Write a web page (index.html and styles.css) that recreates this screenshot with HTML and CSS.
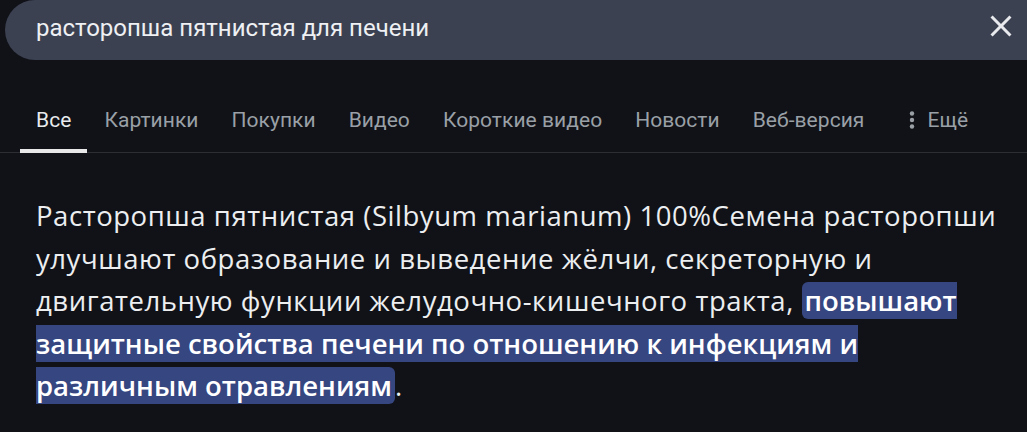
FILE: index.html
```html
<!DOCTYPE html>
<html lang="ru">
<head>
<meta charset="utf-8">
<link rel="stylesheet" href="styles.css">
</head>
<body>
<header class="search">
  <div class="query">расторопша пятнистая для печени</div>
  <button class="clear" aria-label="Очистить">
    <svg viewBox="0 0 24 24"><path d="M19 6.41 17.59 5 12 10.59 6.41 5 5 6.41 10.59 12 5 17.59 6.41 19 12 13.41 17.59 19 19 17.59 13.41 12z" fill="#e8eaed"/></svg>
  </button>
</header>
<nav class="tabs">
  <a class="tab active">Все</a>
  <a class="tab">Картинки</a>
  <a class="tab">Покупки</a>
  <a class="tab">Видео</a>
  <a class="tab">Короткие видео</a>
  <a class="tab">Новости</a>
  <a class="tab">Веб-версия</a>
  <a class="tab more"><svg width="6" height="20" viewBox="0 0 6 20"><circle cx="3" cy="3.5" r="2.2" fill="#9aa0a6"/><circle cx="3" cy="10" r="2.2" fill="#9aa0a6"/><circle cx="3" cy="16.5" r="2.2" fill="#9aa0a6"/></svg>Ещё</a>
</nav>
<main class="answer">
  <p>Расторопша пятнистая (Silbyum marianum) 100%Семена расторопши улучшают образование и выведение жёлчи, секреторную и двигательную функции желудочно-кишечного тракта, <mark class="hl">повышают защитные свойства печени по отношению к инфекциям и различным отравлениям</mark>.</p>
</main>
</body>
</html>
```
FILE: styles.css
```css
html, body {
  margin: 0;
  padding: 0;
  background: #101218;
}
body {
  width: 1027px;
  height: 432px;
  overflow: hidden;
  color: #e8eaed;
  font-family: Roboto, "Liberation Sans", Arial, sans-serif;
}
.search {
  display: flex;
  align-items: center;
  height: 60px;
  margin-left: 5px;
  margin-right: -40px;
  padding: 0 48px 0 31px;
  background: #3c4151;
  border-radius: 30px;
}
.query {
  flex: 1;
  font-size: 24px;
  color: #eef0f3;
  padding-bottom: 4px;
}
.clear {
  display: flex;
  border: 0;
  background: none;
  padding: 0;
  margin-bottom: 9px;
}
.clear svg {
  width: 36px;
  height: 36px;
}
.tabs {
  display: flex;
  align-items: stretch;
  gap: 1px;
  margin-top: 33px;
  padding-left: 20px;
  height: 59px;
  border-bottom: 1px solid #2c2e34;
}
.tab {
  display: flex;
  align-items: center;
  gap: 12px;
  padding: 0 16px 3px;
  font-size: 21px;
  letter-spacing: 0.05px;
  color: #9aa0a6;
  border-bottom: 4px solid transparent;
  margin-bottom: -1px;
}
.tab.active {
  color: #e8eaed;
  border-bottom-color: #e8e8e8;
}
.tab.more {
  margin-left: 12px;
}
.answer {
  padding: 42px 20px 0 36px;
}
.answer p {
  margin: 0;
  font-family: "Open Sans", sans-serif;
  font-size: 27.5px;
  letter-spacing: 0.55px;
  line-height: 42.5px;
  color: #eceef0;
}
.hl {
  background: #364681;
  color: #ffffff;
  font-weight: 600;
  letter-spacing: 0;
  padding: 0 3px;
  border-radius: 6px;
}
```
